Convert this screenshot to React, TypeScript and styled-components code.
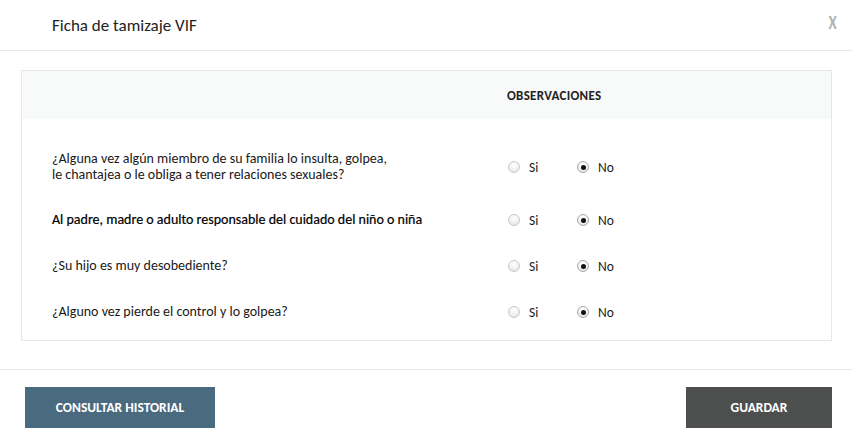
import React from "react";
import styled, { createGlobalStyle } from "styled-components";

const Global = createGlobalStyle`
  html, body { margin: 0; padding: 0; background: #fff; }
  body { font-family: Carlito, Calibri, Lato, "Open Sans", sans-serif; color: #222; }
  * { box-sizing: border-box; }
`;

const Modal = styled.div`
  width: 852px;
  height: 442px;
  display: flex;
  flex-direction: column;
  background: #fff;
  overflow: hidden;
`;

const Header = styled.div`
  height: 51px;
  display: flex;
  align-items: center;
  justify-content: space-between;
  padding: 0 14px 0 52px;
  border-bottom: 1px solid #e8e8e8;
`;

const Title = styled.h1`
  margin: 0;
  font-size: 17px;
  font-weight: 400;
  color: #222;
`;

const Close = styled.span`
  font-size: 20px;
  font-weight: 700;
  color: #b3b3b3;
  margin-top: -6px;
  transform: scaleX(0.75);
`;

const Body = styled.div`
  padding: 19px 20px 28px 21px;
  border-bottom: 1px solid #e8e8e8;
`;

const Table = styled.div`
  border: 1px solid #e6e6e6;
  height: 271px;
  display: flex;
  flex-direction: column;
`;

const HeadRow = styled.div`
  height: 48px;
  background: #f8f9f9;
  display: grid;
  grid-template-columns: 485px 1fr;
  align-items: center;
`;

const HeadCell = styled.div`
  font-size: 13px;
  font-weight: 700;
  letter-spacing: 0.3px;
  color: #222;
`;

const Rows = styled.div`
  padding-top: 18px;
  display: flex;
  flex-direction: column;
`;

const Row = styled.div<{ $h: number }>`
  height: ${(p) => p.$h}px;
  display: grid;
  grid-template-columns: 485px 1fr;
  align-items: center;
`;

const Question = styled.div<{ $strong?: boolean }>`
  padding-left: 30px;
  font-size: 14px;
  line-height: 16px;
  color: ${(p) => (p.$strong ? "#000" : "#1a1a1a")};
  font-weight: 400;
  -webkit-text-stroke: ${(p) => (p.$strong ? "0.2px #000" : "0")};
`;

const Options = styled.div`
  display: flex;
  align-items: center;
  padding-left: 1px;
`;

const Option = styled.label`
  display: flex;
  align-items: center;
  gap: 9px;
  width: 69px;
  font-size: 13.5px;
  color: #1a1a1a;
`;

const Radio = styled.span<{ $on?: boolean }>`
  width: 12px;
  height: 12px;
  border-radius: 50%;
  border: 1px solid ${(p) => (p.$on ? "#a9a9a9" : "#c9c9c9")};
  background: radial-gradient(circle at 50% 30%, #ffffff 0%, #f1f1f1 55%, #dcdcdc 100%);
  display: flex;
  align-items: center;
  justify-content: center;
  &::after {
    content: "";
    width: 5px;
    height: 5px;
    border-radius: 50%;
    background: #111;
    display: ${(p) => (p.$on ? "block" : "none")};
  }
`;

const Footer = styled.div`
  display: flex;
  justify-content: space-between;
  padding: 17px 20px 0 25px;
`;

const Button = styled.button<{ $dark?: boolean; $w: number }>`
  width: ${(p) => p.$w}px;
  height: 41px;
  border: none;
  border-radius: 0;
  background: ${(p) => (p.$dark ? "#4d4f4e" : "#4a6a7f")};
  color: #fff;
  font-family: inherit;
  font-size: 13.5px;
  font-weight: 700;
  padding: 0;
  cursor: pointer;
`;

const questions: { text: React.ReactNode; h: number; strong?: boolean }[] = [
  {
    text: (
      <>
        ¿Alguna vez algún miembro de su familia lo insulta, golpea,
        <br />
        le chantajea o le obliga a tener relaciones sexuales?
      </>
    ),
    h: 60,
  },
  { text: "Al padre, madre o adulto responsable del cuidado del niño o niña", h: 46, strong: true },
  { text: "¿Su hijo es muy desobediente?", h: 46 },
  { text: "¿Alguno vez pierde el control y lo golpea?", h: 46 },
];

export default function App() {
  return (
    <>
      <Global />
      <Modal>
        <Header>
          <Title>Ficha de tamizaje VIF</Title>
          <Close>X</Close>
        </Header>
        <Body>
          <Table>
            <HeadRow>
              <div />
              <HeadCell>OBSERVACIONES</HeadCell>
            </HeadRow>
            <Rows>
              {questions.map((q, i) => (
                <Row key={i} $h={q.h}>
                  <Question $strong={q.strong}>{q.text}</Question>
                  <Options>
                    <Option>
                      <Radio />
                      Si
                    </Option>
                    <Option>
                      <Radio $on />
                      No
                    </Option>
                  </Options>
                </Row>
              ))}
            </Rows>
          </Table>
        </Body>
        <Footer>
          <Button $w={190}>CONSULTAR HISTORIAL</Button>
          <Button $w={146} $dark>
            GUARDAR
          </Button>
        </Footer>
      </Modal>
    </>
  );
}
